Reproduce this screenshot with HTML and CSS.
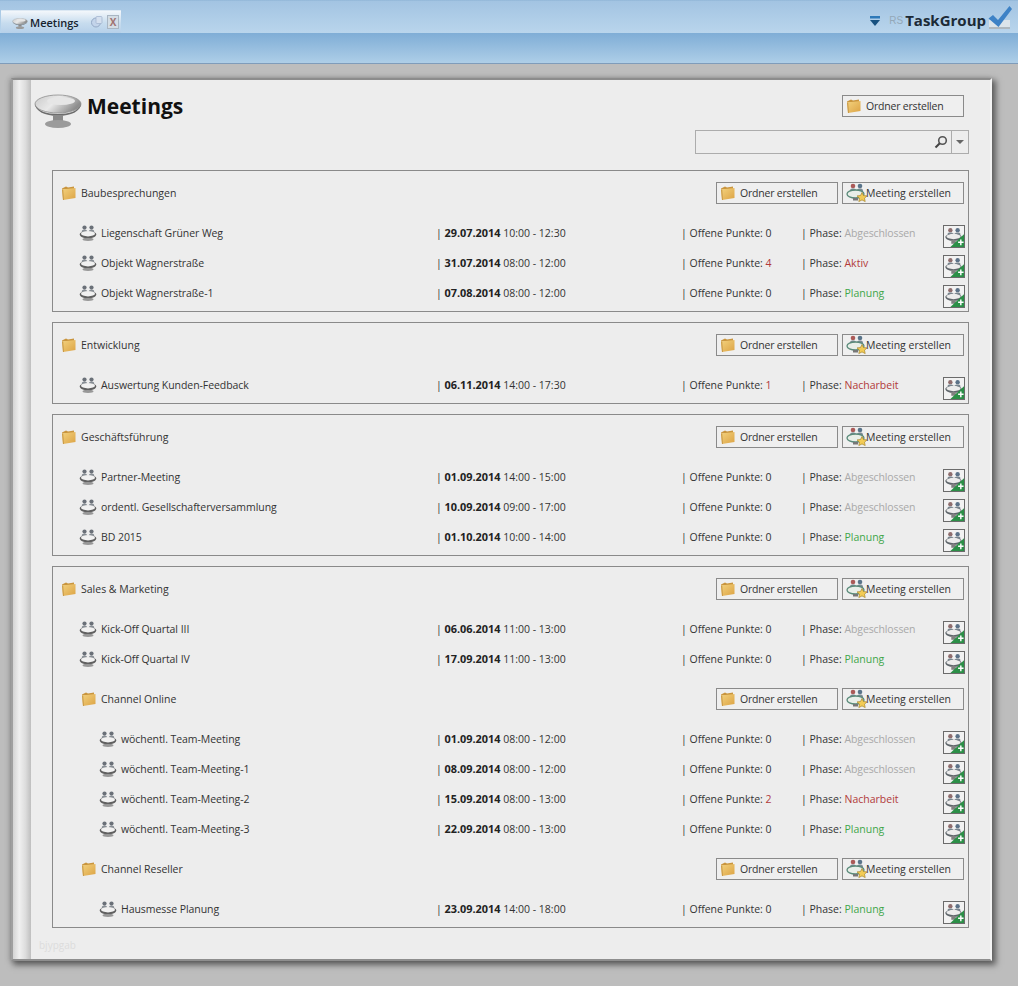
FILE: index.html
```html
<!DOCTYPE html>
<html lang="de">
<head>
<meta charset="utf-8">
<title>Meetings</title>
<link rel="stylesheet" href="styles.css">
</head>
<body>
<svg class="defs" width="0" height="0" aria-hidden="true">
  <defs>
    <linearGradient id="gTable" x1="0" y1="0" x2="1" y2="0.4"><stop offset="0" stop-color="#c9c9c9"/><stop offset=".5" stop-color="#e9e9e9"/><stop offset="1" stop-color="#8d8d8d"/></linearGradient>
    <linearGradient id="gFolder" x1="0" y1="0" x2="1" y2="1"><stop offset="0" stop-color="#f3d27e"/><stop offset="1" stop-color="#dca344"/></linearGradient>
  </defs>
  <symbol id="table" viewBox="0 0 48 34">
    <ellipse cx="24" cy="10" rx="23" ry="9" fill="url(#gTable)" stroke="#8d8d8d" stroke-width=".8"/>
    <path d="M1 10c2 7 12 10 23 10s21-3 23-10c0 7-10 12-23 12S1 17 1 10z" fill="#6d6d6d"/>
    <path d="M19 21h10v6h-10z" fill="#8a8a8a"/>
    <ellipse cx="24" cy="30" rx="13" ry="4" fill="#9b9b9b"/>
    <ellipse cx="27" cy="7" rx="14" ry="4" fill="#e6e6e6"/>
  </symbol>
  <symbol id="folder" viewBox="0 0 16 16">
    <path d="M1 3.500 5 1.500l2 1 6-1v3H1z" fill="#c9953e"/>
    <path d="M1 4.500 14.500 3v10L2 15z" fill="url(#gFolder)"/>
    <path d="M1 4.500 2 15l1-.1L2.200 4.400z" fill="#c99a48"/>
  </symbol>
  <symbol id="meet" viewBox="0 0 18 16">
    <circle cx="5.500" cy="2.600" r="2.100" fill="#6a7078"/><circle cx="12.500" cy="2.600" r="2.100" fill="#6a7078"/>
    <path d="M2.800 8V6.300C2.800 5.200 4 4.800 5.500 4.800S8 5.200 8 6.300V8zM10 8V6.300C10 5.200 11 4.800 12.500 4.800s2.700.4 2.700 1.500V8z" fill="#868d94"/>
    <path d="M.8 9.200c0-2 3.700-3 8.200-3s8.200 1 8.200 3c0 2.600-3.700 4-8.200 4S.8 11.800.8 9.200z" fill="#5f5f5f"/>
    <ellipse cx="9" cy="8.700" rx="7" ry="2.700" fill="#f1f1f1"/>
    <path d="M5.500 12.800h7v1.200h-7z" fill="#666"/><ellipse cx="9" cy="14.500" rx="5.500" ry="1.400" fill="#989898"/>
  </symbol>
  <symbol id="meetnew" viewBox="0 0 22 20">
    <circle cx="7" cy="3" r="2.300" fill="#ab5a58"/><circle cx="14" cy="3" r="2.300" fill="#59748a"/>
    <path d="M4 10V7.500C4 6 5.500 5.500 7 5.500S10 6 10 7.500V10zM11 10V7.500C11 6 12.500 5.500 14 5.500S17 6 17 7.500V10z" fill="#7d8b96"/>
    <ellipse cx="9.500" cy="11" rx="8.500" ry="4" fill="#e8eee8" stroke="#5a8a7a" stroke-width="1.300"/>
    <path d="M7 15h5v2.500H7z" fill="#777"/>
    <path d="M16 9.500l1.500 3 3.500.4-2.500 2.300.7 3.400-3.200-1.700-3.200 1.700.7-3.400-2.500-2.300 3.500-.4z" fill="#f2cb55" stroke="#a8872c" stroke-width=".7"/>
  </symbol>
  <symbol id="meetadd" viewBox="0 0 22 23">
    <rect width="22" height="23" fill="#f2f2f2"/>
    <circle cx="7" cy="4.500" r="2.400" fill="#8f6e6e"/><circle cx="15" cy="4.500" r="2.400" fill="#5c7288"/>
    <path d="M4 11V8.500C4 7.200 5.500 7 7 7s3 .2 3 1.500V11zM12 11V8.500C12 7.200 13.500 7 15 7s3 .2 3 1.500V11z" fill="#78858f"/>
    <path d="M1.500 12c0-2 4-3.500 9-3.500s9 1.500 9 3.500c0 2.600-4 4.300-9 4.300s-9-1.700-9-4.300z" fill="#5f666b"/>
    <ellipse cx="10.500" cy="11.500" rx="7.800" ry="2.900" fill="#ececec"/>
    <path d="M8 15.500h5v4H8z" fill="#808080"/>
    <path d="M22 9v14H7z" fill="#2b8f47"/>
    <path d="M15.500 17h2.200v-2.300h1.600V17h2.200v1.600h-2.200V21h-1.600v-2.400h-2.200z" fill="#fff"/>
  </symbol>
</svg>

<header class="topbar">
  <div class="tabstrip">
    <div class="tab">
      <svg class="tab-icon"><use href="#table"/></svg>
      <span class="tab-title">Meetings</span>
      <svg class="tab-pin" viewBox="0 0 14 14"><circle cx="6" cy="7.500" r="4.500" fill="#c3d4ea" stroke="#94a9c6"/><rect x="6" y="1.500" width="6" height="7" rx="1" fill="#d5e0ef" stroke="#a5b6cf" stroke-width=".8"/></svg>
      <span class="tab-close">X</span>
    </div>
    <div class="brand">
      <svg class="brand-menu" viewBox="0 0 12 11"><path d="M1 0h10v2.500H1z" fill="#2e79b8"/><path d="M1 4h10L6 10z" fill="#17517f"/></svg>
      <span class="brand-rs">RS</span>
      <span class="brand-name">TaskGroup</span>
      <svg class="brand-check" viewBox="0 0 26 26"><path d="M2 15v9h21v-9z" fill="#dbe4ea"/><path d="M2 22h21v2H2z" fill="#aeb8bf"/><path d="M1.500 13.500 6 10l5 5L22.500 1 25 4 11.500 22z" fill="#3d82c6"/></svg>
    </div>
  </div>
  <div class="subbar"></div>
</header>

<main class="stage">
  <div class="panel">
    <div class="stripe"></div>
    <div class="content">
      <div class="page-head">
        <svg class="page-icon"><use href="#table"/></svg>
        <h1 class="page-title">Meetings</h1>
        <button class="btn btn-top"><svg class="btn-ico"><use href="#folder"/></svg><span class="btn-label">Ordner erstellen</span></button>
      </div>
      <div class="search">
        <div class="search-field">
          <svg class="search-lens" viewBox="0 0 14 14"><circle cx="8.500" cy="5.500" r="3.800" fill="none" stroke="#555" stroke-width="1.600"/><path d="M5.800 8.200 1.500 12.500" stroke="#444" stroke-width="2"/></svg>
        </div>
        <div class="search-drop"><span class="caret"></span></div>
      </div>

      <section class="group">
        <div class="folder-row">
          <svg class="f-ico"><use href="#folder"/></svg><span class="f-name">Baubesprechungen</span>
          <button class="btn"><svg class="btn-ico"><use href="#folder"/></svg><span class="btn-label">Ordner erstellen</span></button>
          <button class="btn"><svg class="btn-ico2"><use href="#meetnew"/></svg>Meeting erstellen</button>
        </div>
        <div class="row"><div class="r-name"><svg class="m-ico"><use href="#meet"/></svg>Liegenschaft Grüner Weg</div><div class="cell">| <b>29.07.2014</b> 10:00 - 12:30</div><div class="cell">| Offene Punkte: 0</div><div class="cell">| Phase: <span class="p-done">Abgeschlossen</span></div><svg class="add"><use href="#meetadd"/></svg></div>
        <div class="row"><div class="r-name"><svg class="m-ico"><use href="#meet"/></svg>Objekt Wagnerstraße</div><div class="cell">| <b>31.07.2014</b> 08:00 - 12:00</div><div class="cell">| Offene Punkte: <span class="p-red">4</span></div><div class="cell">| Phase: <span class="p-red">Aktiv</span></div><svg class="add"><use href="#meetadd"/></svg></div>
        <div class="row"><div class="r-name"><svg class="m-ico"><use href="#meet"/></svg>Objekt Wagnerstraße-1</div><div class="cell">| <b>07.08.2014</b> 08:00 - 12:00</div><div class="cell">| Offene Punkte: 0</div><div class="cell">| Phase: <span class="p-plan">Planung</span></div><svg class="add"><use href="#meetadd"/></svg></div>
      </section>

      <section class="group">
        <div class="folder-row">
          <svg class="f-ico"><use href="#folder"/></svg><span class="f-name">Entwicklung</span>
          <button class="btn"><svg class="btn-ico"><use href="#folder"/></svg><span class="btn-label">Ordner erstellen</span></button>
          <button class="btn"><svg class="btn-ico2"><use href="#meetnew"/></svg>Meeting erstellen</button>
        </div>
        <div class="row"><div class="r-name"><svg class="m-ico"><use href="#meet"/></svg>Auswertung Kunden-Feedback</div><div class="cell">| <b>06.11.2014</b> 14:00 - 17:30</div><div class="cell">| Offene Punkte: <span class="p-red">1</span></div><div class="cell">| Phase: <span class="p-red">Nacharbeit</span></div><svg class="add"><use href="#meetadd"/></svg></div>
      </section>

      <section class="group">
        <div class="folder-row">
          <svg class="f-ico"><use href="#folder"/></svg><span class="f-name">Geschäftsführung</span>
          <button class="btn"><svg class="btn-ico"><use href="#folder"/></svg><span class="btn-label">Ordner erstellen</span></button>
          <button class="btn"><svg class="btn-ico2"><use href="#meetnew"/></svg>Meeting erstellen</button>
        </div>
        <div class="row"><div class="r-name"><svg class="m-ico"><use href="#meet"/></svg>Partner-Meeting</div><div class="cell">| <b>01.09.2014</b> 14:00 - 15:00</div><div class="cell">| Offene Punkte: 0</div><div class="cell">| Phase: <span class="p-done">Abgeschlossen</span></div><svg class="add"><use href="#meetadd"/></svg></div>
        <div class="row"><div class="r-name"><svg class="m-ico"><use href="#meet"/></svg>ordentl. Gesellschafterversammlung</div><div class="cell">| <b>10.09.2014</b> 09:00 - 17:00</div><div class="cell">| Offene Punkte: 0</div><div class="cell">| Phase: <span class="p-done">Abgeschlossen</span></div><svg class="add"><use href="#meetadd"/></svg></div>
        <div class="row"><div class="r-name"><svg class="m-ico"><use href="#meet"/></svg>BD 2015</div><div class="cell">| <b>01.10.2014</b> 10:00 - 14:00</div><div class="cell">| Offene Punkte: 0</div><div class="cell">| Phase: <span class="p-plan">Planung</span></div><svg class="add"><use href="#meetadd"/></svg></div>
      </section>

      <section class="group">
        <div class="folder-row">
          <svg class="f-ico"><use href="#folder"/></svg><span class="f-name">Sales &amp; Marketing</span>
          <button class="btn"><svg class="btn-ico"><use href="#folder"/></svg><span class="btn-label">Ordner erstellen</span></button>
          <button class="btn"><svg class="btn-ico2"><use href="#meetnew"/></svg>Meeting erstellen</button>
        </div>
        <div class="row"><div class="r-name"><svg class="m-ico"><use href="#meet"/></svg>Kick-Off Quartal III</div><div class="cell">| <b>06.06.2014</b> 11:00 - 13:00</div><div class="cell">| Offene Punkte: 0</div><div class="cell">| Phase: <span class="p-done">Abgeschlossen</span></div><svg class="add"><use href="#meetadd"/></svg></div>
        <div class="row"><div class="r-name"><svg class="m-ico"><use href="#meet"/></svg>Kick-Off Quartal IV</div><div class="cell">| <b>17.09.2014</b> 11:00 - 13:00</div><div class="cell">| Offene Punkte: 0</div><div class="cell">| Phase: <span class="p-plan">Planung</span></div><svg class="add"><use href="#meetadd"/></svg></div>

        <div class="folder-row sub">
          <svg class="f-ico"><use href="#folder"/></svg><span class="f-name">Channel Online</span>
          <button class="btn"><svg class="btn-ico"><use href="#folder"/></svg><span class="btn-label">Ordner erstellen</span></button>
          <button class="btn"><svg class="btn-ico2"><use href="#meetnew"/></svg>Meeting erstellen</button>
        </div>
        <div class="row nested"><div class="r-name"><svg class="m-ico"><use href="#meet"/></svg>wöchentl. Team-Meeting</div><div class="cell">| <b>01.09.2014</b> 08:00 - 12:00</div><div class="cell">| Offene Punkte: 0</div><div class="cell">| Phase: <span class="p-done">Abgeschlossen</span></div><svg class="add"><use href="#meetadd"/></svg></div>
        <div class="row nested"><div class="r-name"><svg class="m-ico"><use href="#meet"/></svg>wöchentl. Team-Meeting-1</div><div class="cell">| <b>08.09.2014</b> 08:00 - 12:00</div><div class="cell">| Offene Punkte: 0</div><div class="cell">| Phase: <span class="p-done">Abgeschlossen</span></div><svg class="add"><use href="#meetadd"/></svg></div>
        <div class="row nested"><div class="r-name"><svg class="m-ico"><use href="#meet"/></svg>wöchentl. Team-Meeting-2</div><div class="cell">| <b>15.09.2014</b> 08:00 - 13:00</div><div class="cell">| Offene Punkte: <span class="p-red">2</span></div><div class="cell">| Phase: <span class="p-red">Nacharbeit</span></div><svg class="add"><use href="#meetadd"/></svg></div>
        <div class="row nested"><div class="r-name"><svg class="m-ico"><use href="#meet"/></svg>wöchentl. Team-Meeting-3</div><div class="cell">| <b>22.09.2014</b> 08:00 - 13:00</div><div class="cell">| Offene Punkte: 0</div><div class="cell">| Phase: <span class="p-plan">Planung</span></div><svg class="add"><use href="#meetadd"/></svg></div>

        <div class="folder-row sub">
          <svg class="f-ico"><use href="#folder"/></svg><span class="f-name">Channel Reseller</span>
          <button class="btn"><svg class="btn-ico"><use href="#folder"/></svg><span class="btn-label">Ordner erstellen</span></button>
          <button class="btn"><svg class="btn-ico2"><use href="#meetnew"/></svg>Meeting erstellen</button>
        </div>
        <div class="row nested"><div class="r-name"><svg class="m-ico"><use href="#meet"/></svg>Hausmesse Planung</div><div class="cell">| <b>23.09.2014</b> 14:00 - 18:00</div><div class="cell">| Offene Punkte: 0</div><div class="cell">| Phase: <span class="p-plan">Planung</span></div><svg class="add"><use href="#meetadd"/></svg></div>
      </section>

      <div class="foot">bjypgab</div>
    </div>
  </div>
</main>
</body>
</html>
```
FILE: styles.css
```css
* { box-sizing: border-box; }
html, body { margin: 0; height: 986px; overflow: hidden; }
body {
  background: #bdbdbd;
  font-family: "Open Sans", "Noto Sans", sans-serif;
  font-size: 10.5px;
  color: #333;
}
.defs { position: absolute; }

/* top bar */
.topbar { height: 64px; border-bottom: 1px solid #7f9cba; }
.tabstrip {
  height: 33px;
  display: flex;
  justify-content: space-between;
  background: linear-gradient(#8fb4d6 0, #a3c4e2 4%, #b9d5ec 100%);
  padding: 10px 0 0 1px;
}
.tab {
  width: 120px;
  height: 23px;
  display: flex;
  align-items: center;
  background: linear-gradient(#f3f7fb, #c7dcee 55%, #b6d0e9);
  border-top: 1px solid #dce8f3;
  padding-left: 11px;
}
.tab-icon { width: 16px; height: 11px; margin-top: 3px; }
.tab-title { font-size: 11px; font-weight: 600; color: #16222e; margin-left: 2px; width: 60px; }
.tab-pin { width: 14px; height: 14px; margin-right: 3px; }
.tab-close {
  width: 12px; height: 14px;
  border: 1px solid #a9b6c3;
  background: #d4dde5;
  color: #a07272;
  font-size: 10px;
  font-weight: 700;
  line-height: 12px;
  text-align: center;
}
.brand { display: flex; align-items: center; height: 24px; margin-top: -3px; padding-right: 5px; }
.brand-menu { width: 12px; height: 11px; margin-right: 8px; margin-top: 4px; }
.brand-rs { font-family: "Liberation Sans", sans-serif; font-size: 10px; color: #94a8b8; margin-right: 2px; margin-top: 3px; }
.brand-name { font-family: "Open Sans", sans-serif; font-size: 15px; font-weight: 700; color: #1c2a36; margin-top: 1px; }
.brand-check { width: 26px; height: 26px; margin-left: 1px; margin-top: -3px; }
.subbar {
  height: 30px;
  background: linear-gradient(#7fadd6, #a9cbe6 90%, #afcee7);
}

/* panel */
.stage { padding: 14px 26px 0 11px; }
.panel {
  height: 883px;
  display: flex;
  background: #ededed;
  border: 2px solid #a0a0a0;
  border-top-color: #8c8c8c;
  border-right: 2px solid #f5f5f5;
  border-bottom: 2px solid #8e8e8e;
  box-shadow: 3px 3px 6px 1px rgba(0, 0, 0, .5), -2px 0 5px rgba(0, 0, 0, .12);
}
.stripe {
  width: 18px;
  flex: none;
  background: linear-gradient(90deg, #d4d4d4, #f0f0f0 35%, #dcdcdc 70%, #bfbfbf);
}
.content { flex: 1; padding: 0 21px 0 21px; }

.page-head { height: 50px; display: flex; align-items: flex-start; margin-left: -18px; position: relative; }
.page-icon { width: 48px; height: 34px; margin-top: 14px; }
.page-title { margin: 11px 0 0 5px; font-size: 21px; font-weight: 700; line-height: 30px; color: #111; }
.btn-top { position: absolute; right: 5px; top: 15px; }

.btn {
  width: 122px;
  height: 22px;
  display: flex;
  align-items: center;
  padding: 0 0 0 3px;
  background: #efefef;
  border: 1px solid #8a8a8a;
  font: inherit;
  color: #333;
  white-space: nowrap;
}
.btn-label { letter-spacing: -.2px; }
.btn-ico { width: 16px; height: 16px; margin: 0 4px 0 0; }
.btn-ico2 { width: 22px; height: 20px; margin: 0 -2px 0 0; }

.search { display: flex; height: 24px; margin: 0 0 16px auto; width: 274px; border: 1px solid #acacac; }
.search-field { flex: 1; display: flex; justify-content: flex-end; align-items: center; padding-right: 3px; }
.search-lens { width: 14px; height: 14px; }
.search-drop { width: 17px; border-left: 1px solid #acacac; display: flex; align-items: center; justify-content: center; }
.caret { border-top: 4px solid #666; border-left: 4px solid transparent; border-right: 4px solid transparent; }

/* groups */
.group { border: 1px solid #8a8a8a; margin-bottom: 10px; padding-bottom: 3px; }
.folder-row { height: 47px; display: flex; align-items: center; padding: 0 4px 3px 8px; }
.folder-row .btn + .btn { margin-left: 4px; }
.f-ico { width: 16px; height: 16px; margin-right: 4px; flex: none; }
.f-name { flex: 1; }
.folder-row.sub { height: 50px; padding: 0 4px 0 28px; }

.row {
  height: 30px;
  display: grid;
  grid-template-columns: 1fr 245px 120px 140px 22px;
  padding: 0 3px 0 26px;
  align-items: center;
  white-space: nowrap;
}
.row.nested { padding-left: 46px; }
.r-name { display: flex; align-items: center; letter-spacing: -.06px; }
.cell { margin-left: -2px; line-height: 14px; }
.m-ico { width: 18px; height: 16px; margin-right: 4px; }
.add { width: 22px; height: 23px; border: 1px solid #6b6b6b; background: #f2f2f2; margin-top: 6px; }
b { font-weight: 700; font-size: 10.9px; line-height: 1; color: #222; }
.p-done { color: #a9a9a9; letter-spacing: -.12px; }
.p-red { color: #b23a3a; }
.p-plan { color: #3fa64a; }

.foot { color: #dcdcdc; font-size: 10px; margin: 1px 0 0 -13px; }
```
